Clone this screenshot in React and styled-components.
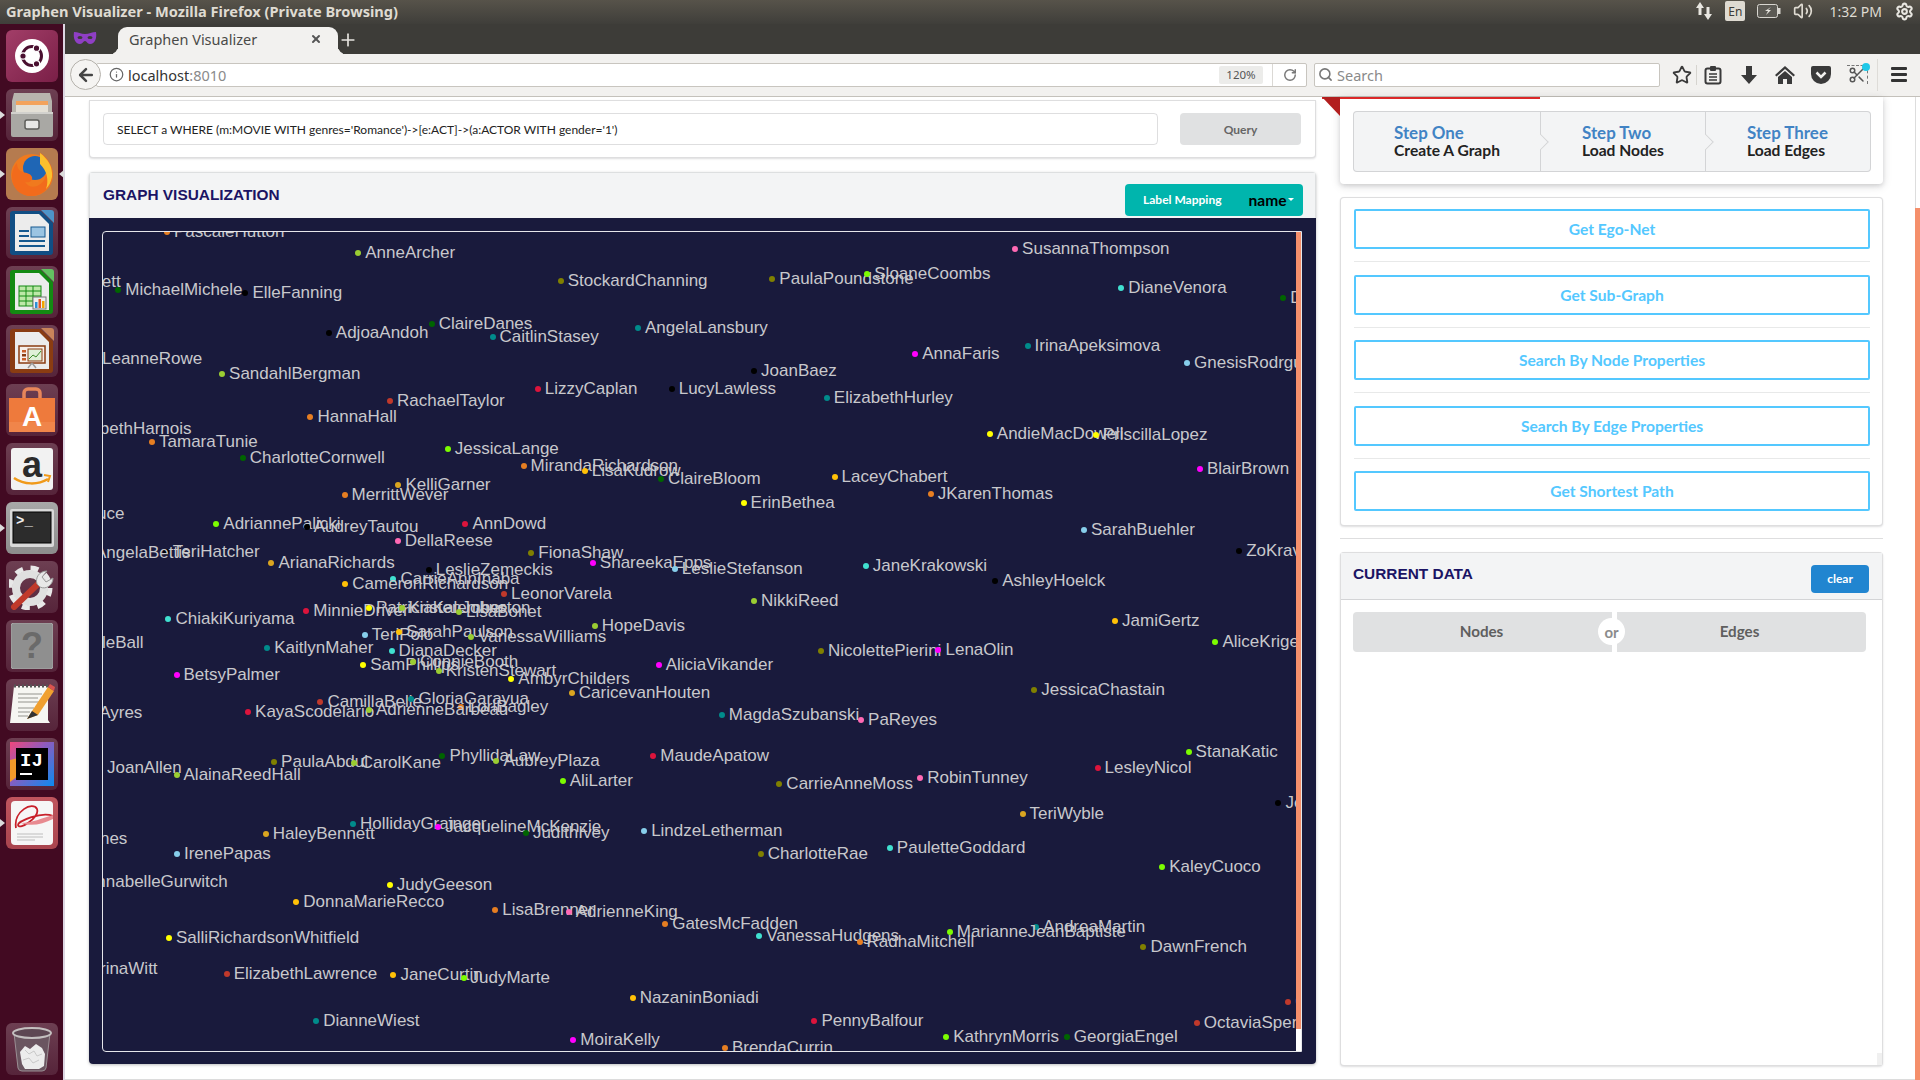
import React from "react";
import styled, { createGlobalStyle } from "styled-components";
import { Star, Plus, X, Search, RotateCw, Info, ArrowLeft, Settings, Volume2, Scissors } from "lucide-react";

const C = {
  or: "#e67e22",
  yg: "#9acd32",
  ol: "#808000",
  dg: "#006400",
  bk: "#000000",
  te: "#008b8b",
  cr: "#dc143c",
  br: "#c0392b",
  la: "#7cfc00",
  go: "#daa520",
  au: "#ffc107",
  ye: "#ffff00",
  pk: "#ff69b4",
  ma: "#ff00ff",
  tu: "#40e0d0",
  sk: "#87ceeb",
};

// node tables, one per area of the canvas: name, dot x, dot y, colour
const AREAS = [
  {
    ox: 100,
    oy: 225,
    kx: 600 / 1568,
    nodes: [
      ["PascaleHutton", 175, 22, "or"],
      ["AnneArcher", 675, 84, "yg"],
      ["MichaelMichele", 48, 195, "dg"],
      ["ElleFanning", 380, 203, "bk"],
      ["StockardChanning", 1204, 169, "ol"],
      ["AdjoaAndoh", 598, 323, "bk"],
      ["ClaireDanes", 867, 298, "dg"],
      ["CaitlinStasey", 1026, 335, "te"],
      ["AngelaLansbury", 1406, 310, "te"],
      ["SandahlBergman", 319, 448, "yg"],
      ["RachaelTaylor", 758, 527, "br"],
      ["HannaHall", 550, 575, "or"],
      ["LizzyCaplan", 1144, 491, "cr"],
      ["LucyLawless", 1494, 493, "bk"],
      ["TamaraTunie", 136, 650, "or"],
      ["CharlotteCornwell", 373, 700, "dg"],
      ["JessicaLange", 909, 673, "la"],
      ["MirandaRichardson", 1107, 723, "or"],
      ["LisaKudrow", 1267, 738, "au"],
      ["ClaireBloom", 1466, 763, "dg"],
      ["KelliGarner", 780, 781, "go"],
      ["MerrittWever", 639, 811, "or"],
      ["AdriannePalicki", 304, 897, "la"],
      ["AudreyTautou", 540, 905, "bk"],
      ["AnnDowd", 955, 897, "cr"],
      ["DellaReese", 778, 949, "pk"],
      ["FionaShaw", 1127, 983, "ol"],
      ["TeriHatcher", 172, 980, "bk"],
      ["ArianaRichards", 448, 1015, "go"],
      ["ShareekaEpps", 1288, 1015, "ma"],
      ["LeslieZemeckis", 859, 1034, "bk"],
      ["LeslieStefanson", 1502, 1032, "sk"],
      ["CarrieAnnInaba", 767, 1062, "tu"],
      ["CameronRichardson", 641, 1076, "au"],
      ["LeonorVarela", 1056, 1108, "br"],
      ["ChiakiKuriyama", 179, 1181, "tu"],
      ["MinnieDriver", 539, 1159, "cr"],
      ["PatriciaKalember", 703, 1150, "ye"],
      ["KristenJohnston", 788, 1148, "yg"],
      ["LisaBonet", 938, 1162, "yg"],
      ["HopeDavis", 1293, 1204, "yg"],
      ["TeriPolo", 692, 1229, "sk"],
      ["SarahPaulson", 782, 1222, "au"],
      ["VanessaWilliams", 970, 1237, "yg"],
    ],
  },
  {
    ox: 700,
    oy: 225,
    kx: 610 / 1568,
    nodes: [
      ["SusannaThompson", 810, 73, "pk"],
      ["PaulaPoundstone", 186, 161, "ol"],
      ["SloaneCoombs", 430, 148, "la"],
      ["DianeVenora", 1083, 188, "tu"],
      ["DeniseCrosby", 1499, 218, "dg"],
      ["AnnaFaris", 553, 387, "ma"],
      ["IrinaApeksimova", 842, 364, "te"],
      ["GnesisRodrguez", 1252, 414, "sk"],
      ["JoanBaez", 139, 437, "bk"],
      ["ElizabethHurley", 326, 520, "te"],
      ["AndieMacDowell", 745, 627, "ye"],
      ["PriscillaLopez", 1017, 630, "ye"],
      ["BlairBrown", 1285, 731, "ma"],
      ["LaceyChabert", 346, 755, "au"],
      ["JKarenThomas", 593, 807, "or"],
      ["ErinBethea", 112, 835, "ye"],
      ["SarahBuehler", 987, 916, "sk"],
      ["ZoKravitz", 1386, 979, "bk"],
      ["JaneKrakowski", 426, 1023, "tu"],
      ["AshleyHoelck", 759, 1069, "bk"],
      ["NikkiReed", 139, 1127, "yg"],
      ["JamiGertz", 1067, 1189, "au"],
      ["AliceKrige", 1325, 1250, "la"],
    ],
  },
  {
    ox: 100,
    oy: 640,
    kx: 600 / 1568,
    nodes: [
      ["KaitlynMaher", 437, 25, "te"],
      ["DianaDecker", 762, 32, "tu"],
      ["SamPhillips", 688, 75, "ye"],
      ["ConnieBooth", 818, 67, "yg"],
      ["KristenStewart", 885, 93, "yg"],
      ["AmbyrChilders", 1075, 116, "ye"],
      ["AliciaVikander", 1460, 75, "ma"],
      ["BetsyPalmer", 200, 105, "ma"],
      ["CaricevanHouten", 1233, 158, "go"],
      ["CamillaBelle", 576, 187, "br"],
      ["GloriaGarayua", 814, 176, "te"],
      ["LoriBagley", 943, 200, "or"],
      ["KayaScodelario", 387, 217, "cr"],
      ["AdrienneBarbeau", 703, 209, "yg"],
      ["PaulaAbdul", 455, 367, "ol"],
      ["CarolKane", 663, 368, "yg"],
      ["PhyllidaLaw", 895, 349, "dg"],
      ["AubreyPlaza", 1036, 362, "yg"],
      ["AliLarter", 1209, 424, "la"],
      ["MaudeApatow", 1446, 349, "cr"],
      ["AlainaReedHall", 200, 406, "yg"],
      ["HollidayGrainger", 661, 551, "te"],
      ["JacquelineMcKenzie", 884, 560, "ma"],
      ["JudithIvey", 1113, 580, "dg"],
      ["HaleyBennett", 433, 582, "go"],
      ["LindzeLetherman", 1422, 572, "sk"],
      ["IrenePapas", 201, 643, "sk"],
      ["JudyGeeson", 757, 734, "ye"],
      ["DonnaMarieRecco", 513, 787, "au"],
      ["LisaBrenner", 1033, 809, "or"],
      ["AdrienneKing", 1225, 815, "pk"],
      ["GatesMcFadden", 1477, 851, "or"],
      ["SalliRichardsonWhitfield", 180, 895, "ye"],
      ["ElizabethLawrence", 331, 1002, "br"],
      ["JaneCurtin", 767, 1004, "au"],
      ["JudyMarte", 950, 1015, "la"],
      ["NazaninBoniadi", 1392, 1075, "au"],
      ["DianneWiest", 565, 1143, "te"],
      ["MoiraKelly", 1237, 1200, "ma"],
    ],
  },
  {
    ox: 700,
    oy: 640,
    kx: 610 / 1568,
    nodes: [
      ["NicolettePierini", 311, 32, "ol"],
      ["LenaOlin", 613, 31, "ma"],
      ["JessicaChastain", 859, 150, "ol"],
      ["MagdaSzubanski", 56, 224, "te"],
      ["PaReyes", 414, 241, "pk"],
      ["StanaKatic", 1256, 335, "la"],
      ["LesleyNicol", 1022, 385, "cr"],
      ["RobinTunney", 566, 414, "pk"],
      ["CarrieAnneMoss", 204, 431, "ol"],
      ["TeriWyble", 829, 523, "go"],
      ["CharlotteRae", 156, 643, "ol"],
      ["PauletteGoddard", 488, 625, "tu"],
      ["KaleyCuoco", 1188, 682, "la"],
      ["AndreaMartin", 864, 862, "te"],
      ["MarianneJeanBaptiste", 642, 876, "la"],
      ["VanessaHudgens", 152, 887, "tu"],
      ["RadhaMitchell", 410, 905, "or"],
      ["DawnFrench", 1140, 921, "ol"],
      ["PennyBalfour", 294, 1142, "cr"],
      ["KathrynMorris", 633, 1190, "la"],
      ["GeorgiaEngel", 943, 1192, "dg"],
      ["OctaviaSpencer", 1277, 1150, "br"],
      ["OliviaHussey", 1512, 1085, "br"],
      ["JenniferLopez", 1487, 488, "bk"],
      ["BrendaCurrin", 64, 1223, "or"],
    ],
  },
  {
    // dots are outside the canvas on the left, only part of the label shows
    ox: 0,
    oy: 0,
    kx: 1,
    nodes: [
      ["AngelaBassett", 4, 282, "dg"],
      ["LeanneRowe", 95, 359, "bk"],
      ["ElizabethHarnois", 56, 429, "bk"],
      ["Bruce", 73, 514, "bk"],
      ["AngelaBettis", 88, 553, "bk"],
      ["LucilleBall", 60, 643, "bk"],
      ["AgnesAyres", 44, 713, "bk"],
      ["JoanAllen", 100, 768, "bk"],
      ["Jones", 75, 839, "bk"],
      ["AnnabelleGurwitch", 78, 882, "bk"],
      ["KatarinaWitt", 58, 969, "bk"],
    ],
  },
];

const CANVAS_X = 103;
const CANVAS_Y = 232;

const NODES = AREAS.flatMap((area) =>
  area.nodes.map(([name, x, y, color]) => ({
    name,
    color: C[color],
    left: area.ox + x * area.kx - CANVAS_X,
    top: area.oy + (area.kx === 1 ? y : y / 3) - CANVAS_Y,
  }))
);

const ACTIONS = [
  "Get Ego-Net",
  "Get Sub-Graph",
  "Search By Node Properties",
  "Search By Edge Properties",
  "Get Shortest Path",
];

const STEPS = [
  ["Step One", "Create A Graph", 187],
  ["Step Two", "Load Nodes", 165],
  ["Step Three", "Load Edges", 166],
];

const DocIcon = ({ edge, fold, children }) => (
  <svg width="44" height="46" viewBox="0 0 44 46">
    <path d="M3 1h28l12 12v29a3 3 0 0 1-3 3H3a3 3 0 0 1-3-3V4a3 3 0 0 1 3-3z" fill={edge} />
    <path d="M5 4h24l10 10v27H5z" fill="#ececec" />
    <path d="M31 0h10a3 3 0 0 1 3 3v10z" fill={fold} />
    {children}
  </svg>
);

const launcherItems = [
  {
    key: "ubuntu",
    tint: "linear-gradient(135deg,#a23e68,#7a1f47)",
    icon: (
      <svg width="40" height="40" viewBox="0 0 40 40">
        <circle cx="20" cy="20" r="17" fill="#fff" />
        <circle cx="20" cy="20" r="9.5" fill="none" stroke="#4a1030" strokeWidth="3" />
        <circle cx="11" cy="20" r="3.2" fill="#4a1030" stroke="#fff" strokeWidth="1.2" />
        <circle cx="24.5" cy="12.2" r="3.2" fill="#4a1030" stroke="#fff" strokeWidth="1.2" />
        <circle cx="24.5" cy="27.8" r="3.2" fill="#4a1030" stroke="#fff" strokeWidth="1.2" />
      </svg>
    ),
  },
  {
    key: "files",
    running: true,
    icon: (
      <svg width="44" height="46" viewBox="0 0 44 46">
        <path d="M4 1h36l2 8v12H2V9z" fill="#b7b4ad" />
        <rect x="6" y="9" width="32" height="4" fill="#f3a35c" />
        <rect x="6" y="13" width="32" height="8" fill="#e4e0d6" />
        <rect x="1" y="20" width="42" height="25" rx="2" fill="#a9a8a4" />
        <rect x="1" y="20" width="42" height="2" fill="#d2d1cd" />
        <rect x="15" y="28" width="14" height="9" rx="2" fill="#e8e8e6" stroke="#5d5d5a" strokeWidth="1.5" />
      </svg>
    ),
  },
  {
    key: "firefox",
    running: true,
    active: true,
    tint: "#b57b4f",
    icon: (
      <svg width="46" height="48" viewBox="0 0 46 48">
        <circle cx="23" cy="25" r="21" fill="#f07a1e" />
        <circle cx="26" cy="18" r="12" fill="#1f66b5" />
        <path d="M30 2c10 6 15 16 13 27-2 10-11 17-21 17C11 46 3 38 3 27c0-6 2-11 5-14 0 5 2 8 6 9 4 1 8 2 9 5 1 4-3 6-7 5 3 5 9 6 14 3 7-4 9-13 6-20-2-5-5-9-6-13z" fill="#f26b1c" />
        <path d="M31 3c8 6 13 14 12 24-1 5-3 9-6 12 3-9 1-18-6-25z" fill="#fbc02d" />
      </svg>
    ),
  },
  {
    key: "writer",
    icon: (
      <DocIcon edge="#114e84" fold="#4d94c9">
        <rect x="9" y="20" width="10" height="2" fill="#16598f" />
        <rect x="9" y="25" width="10" height="2" fill="#16598f" />
        <rect x="9" y="30" width="26" height="2" fill="#16598f" />
        <rect x="9" y="35" width="26" height="2" fill="#16598f" />
        <rect x="21" y="17" width="14" height="10" fill="#9bc4e2" stroke="#16598f" />
      </DocIcon>
    ),
  },
  {
    key: "calc",
    icon: (
      <DocIcon edge="#138a12" fold="#63c261">
        <rect x="9" y="17" width="22" height="20" fill="#bde8a8" stroke="#138a12" />
        <path d="M9 22h22M9 27h22M9 32h22M16 17v20M23 17v20" stroke="#138a12" />
        <rect x="23" y="28" width="13" height="12" fill="#eee" stroke="#777" />
        <rect x="25" y="33" width="2.5" height="6" fill="#2d8fd6" />
        <rect x="28.5" y="30" width="2.5" height="9" fill="#e2562a" />
        <rect x="32" y="32" width="2.5" height="7" fill="#f0a500" />
      </DocIcon>
    ),
  },
  {
    key: "impress",
    icon: (
      <DocIcon edge="#8a3c12" fold="#c9835a">
        <rect x="9" y="18" width="26" height="17" fill="#f7f0ea" stroke="#8a3c12" strokeWidth="1.5" />
        <rect x="12" y="22" width="4" height="2.5" fill="#c9602a" />
        <rect x="12" y="26" width="4" height="2.5" fill="#8a3c12" />
        <rect x="12" y="30" width="4" height="2.5" fill="#c9602a" />
        <rect x="18" y="21" width="14" height="12" fill="#dff0d8" stroke="#8a3c12" />
        <path d="M19 31l4-4 3 2 5-6" stroke="#3c8c2a" fill="none" />
        <path d="M22 35l-4 5M22 35l4 5" stroke="#999" strokeWidth="1.5" />
      </DocIcon>
    ),
  },
  {
    key: "software",
    icon: (
      <svg width="46" height="46" viewBox="0 0 46 46">
        <path d="M15 12V6a4 4 0 0 1 4-4h8a4 4 0 0 1 4 4v6" fill="none" stroke="#e8865a" strokeWidth="3.5" />
        <rect x="0" y="11" width="46" height="34" fill="#ee7a3c" />
        <rect x="0" y="35" width="46" height="10" fill="#f0854a" />
        <text x="23" y="39" textAnchor="middle" fontFamily="Liberation Sans, sans-serif" fontWeight="700" fontSize="28" fill="#fff">A</text>
      </svg>
    ),
  },
  {
    key: "amazon",
    icon: (
      <svg width="42" height="42" viewBox="0 0 42 42">
        <rect width="42" height="42" rx="3" fill="#f2f2f2" />
        <text x="21" y="29" textAnchor="middle" fontFamily="Liberation Sans, sans-serif" fontWeight="700" fontSize="36" fill="#2b2b2b">a</text>
        <path d="M3 30c10 7 24 7 34 1" fill="none" stroke="#f09a1a" strokeWidth="2.5" />
        <path d="M33 27l6 1-2 6" fill="none" stroke="#f09a1a" strokeWidth="2" />
      </svg>
    ),
  },
  {
    key: "terminal",
    running: true,
    tint: "linear-gradient(#a8a8a8,#8c8c8c)",
    icon: (
      <svg width="44" height="38" viewBox="0 0 44 38">
        <rect width="44" height="38" rx="2" fill="#d9d9d9" />
        <rect x="3" y="3" width="38" height="31" fill="#2c2c2c" stroke="#000" />
        <text x="6" y="16" fontFamily="Liberation Mono, monospace" fontWeight="700" fontSize="14" fill="#eee">&gt;_</text>
      </svg>
    ),
  },
  {
    key: "settings",
    icon: (
      <svg width="46" height="46" viewBox="0 0 46 46">
        <circle cx="21" cy="24" r="14" fill="none" stroke="#e0e0e0" strokeWidth="8" />
        <circle cx="21" cy="24" r="20" fill="none" stroke="#e8e8e8" strokeWidth="5" strokeDasharray="8 7.7" />
        <path d="M5 43L30 19" stroke="#c0392b" strokeWidth="6" strokeLinecap="round" />
        <path d="M28 20c-2-6 2-13 10-13l-5 6 4 5 7-4c0 7-7 12-13 9z" fill="#e8e8e8" stroke="#999" />
      </svg>
    ),
  },
  {
    key: "help",
    icon: (
      <svg width="42" height="46" viewBox="0 0 42 46">
        <rect width="42" height="46" rx="3" fill="#8f8f8f" stroke="#a8a8a8" />
        <text x="21" y="35" textAnchor="middle" fontFamily="Liberation Sans, sans-serif" fontWeight="700" fontSize="36" fill="#6a6a6a">?</text>
      </svg>
    ),
  },
  {
    key: "editor",
    icon: (
      <svg width="46" height="46" viewBox="0 0 46 46">
        <path d="M5 4h34v34l2 3H1z" fill="#f6f6f2" />
        <path d="M5 4h34" stroke="#555" strokeWidth="3" strokeDasharray="2 2" />
        <path d="M9 12h24M9 16h20M9 20h22M9 26h16M9 30h12M9 34h10" stroke="#b5b5b0" strokeWidth="1.5" />
        <path d="M18 37l5-8L39 5l6 4-16 24z" fill="#f0a030" />
        <path d="M39 5l2-3 5 3-1 4z" fill="#d9534f" />
        <path d="M18 37l5-8 6 4z" fill="#333" />
      </svg>
    ),
  },
  {
    key: "intellij",
    icon: (
      <svg width="44" height="44" viewBox="0 0 44 44">
        <defs>
          <linearGradient id="ij" x1="0" y1="0" x2="1" y2="1">
            <stop offset="0" stopColor="#f0477c" />
            <stop offset="0.45" stopColor="#8a5cc0" />
            <stop offset="1" stopColor="#0a8bf0" />
          </linearGradient>
        </defs>
        <rect width="44" height="44" fill="url(#ij)" />
        <path d="M0 18l8-2v18l-8 6z" fill="#f09a2a" />
        <rect x="6" y="6" width="32" height="32" fill="#000" />
        <text x="10" y="24" fontFamily="Liberation Mono, monospace" fontWeight="700" fontSize="19" fill="#fff">IJ</text>
        <rect x="10" y="31" width="12" height="2" fill="#fff" />
      </svg>
    ),
  },
  {
    key: "evince",
    running: true,
    tint: "linear-gradient(#c0555e,#a8444e)",
    icon: (
      <svg width="42" height="44" viewBox="0 0 42 44">
        <rect width="42" height="44" rx="4" fill="#f6f6f6" />
        <path d="M5 27C2 10 22 0 26 8c3 8-18 22-19 16 0-4 24-14 35-9" fill="none" stroke="#c8202a" strokeWidth="1.8" />
        <path d="M10 22c10 0 22-5 32-8v4c-10 5-22 8-32 4z" fill="#e88a90" />
        <path d="M6 33h26M6 36h26M6 39h18" stroke="#bdbdbd" strokeWidth="1.2" />
      </svg>
    ),
  },
];

const TrashIcon = () => (
  <svg width="40" height="46" viewBox="0 0 40 46">
    <path d="M2 7l4 35a4 4 0 0 0 4 3h20a4 4 0 0 0 4-3l4-35z" fill="#6a5560" stroke="#9a8f94" />
    <ellipse cx="20" cy="7" rx="19" ry="5" fill="#5d4753" stroke="#c4c0c0" strokeWidth="2" />
    <path d="M8 26l5-6 5 3 6-5 6 4 3 6-1 12-5 3H13l-3-5z" fill="#ececec" />
    <path d="M13 24l4 4 5-3 3 5 5-2M11 34l6-2 4 5 6-3" fill="none" stroke="#c9c9c9" />
  </svg>
);

const LauncherDock = () => (
  <Dock>
    {launcherItems.map((item) => (
      <Tile key={item.key} $tint={item.tint}>
        {item.running && <RunPip />}
        {item.active && <ActivePip />}
        {item.icon}
      </Tile>
    ))}
    <TrashTile>
      <TrashIcon />
    </TrashTile>
  </Dock>
);

const TopBar = () => (
  <TitleBar>
    <WindowTitle>Graphen Visualizer - Mozilla Firefox (Private Browsing)</WindowTitle>
    <Tray>
      <svg width="18" height="20" viewBox="0 0 18 20" fill="#e8e6e0">
        <path d="M5 1l4 6H6.500v7h-3V7H1z" />
        <path d="M13 19l-4-6h2.500V6h3v7H17z" />
      </svg>
      <LangBox>En</LangBox>
      <svg width="24" height="14" viewBox="0 0 24 14">
        <rect x="0.500" y="0.500" width="20" height="13" rx="2" fill="#5c5a54" stroke="#d8d6d0" />
        <rect x="21" y="4" width="2.500" height="6" fill="#d8d6d0" />
        <path d="M14 3l-3 3h3l-5 5 2-4H8z" fill="#e8e6e0" />
      </svg>
      <Volume2 size={20} color="#dfdbd2" />
      <Clock>1:32 PM</Clock>
      <Settings size={19} color="#e8e6e0" strokeWidth={2.6} />
    </Tray>
  </TitleBar>
);

const TabRow = () => (
  <TabStrip>
    <svg width="24" height="14" viewBox="0 0 24 14">
      <path d="M1 1c4 0 7 2 11 2s7-2 11-2c1 6-1 12-6 12-3 0-3-3-5-3s-2 3-5 3C2 13 0 7 1 1z" fill="#8f3fc4" />
      <ellipse cx="7" cy="6.500" rx="2.500" ry="1.500" fill="#3d3c38" />
      <ellipse cx="17" cy="6.500" rx="2.500" ry="1.500" fill="#3d3c38" />
    </svg>
    <Tab>
      <TabTitle>Graphen Visualizer</TabTitle>
      <X size={12} color="#555" strokeWidth={4} />
    </Tab>
    <NewTab>
      <Plus size={20} color="#e6e4df" />
    </NewTab>
  </TabStrip>
);

const NavBar = () => (
  <Toolbar>
    <BackButton>
      <ArrowLeft size={20} color="#444" strokeWidth={3} />
    </BackButton>
    <UrlBar>
      <Info size={15} color="#666" />
      <UrlText>
        localhost<span>:8010</span>
      </UrlText>
      <ZoomLevel>120%</ZoomLevel>
      <Reload>
        <RotateCw size={14} color="#777" strokeWidth={2.5} />
      </Reload>
    </UrlBar>
    <SearchBar>
      <Search size={15} color="#777" strokeWidth={2.5} />
      <span>Search</span>
    </SearchBar>
    <StarButton>
      <Star size={20} color="#3a3a3a" strokeWidth={2.2} />
    </StarButton>
    <ToolIcon>
      <svg width="18" height="20" viewBox="0 0 18 20">
        <rect x="1.500" y="3.500" width="15" height="15" rx="2" fill="none" stroke="#3a3a3a" strokeWidth="2" />
        <rect x="6" y="1" width="6" height="5" rx="1" fill="#3a3a3a" />
        <path d="M5 9h8M5 12h8M5 15h8" stroke="#3a3a3a" strokeWidth="1.500" />
      </svg>
    </ToolIcon>
    <ToolIcon>
      <svg width="18" height="20" viewBox="0 0 18 20">
        <path d="M6 1h6v9h5l-8 9-8-9h5z" fill="#3a3a3a" />
      </svg>
    </ToolIcon>
    <ToolIcon>
      <svg width="20" height="20" viewBox="0 0 20 20">
        <path d="M10 1L0 10l1.500 1.500L10 4l8.500 7.500L20 10z" fill="#3a3a3a" />
        <path d="M3 12l7-6 7 6v7h-5v-5H8v5H3z" fill="#3a3a3a" />
      </svg>
    </ToolIcon>
    <ToolIcon>
      <svg width="20" height="18" viewBox="0 0 20 18">
        <path d="M2 0h16a2 2 0 0 1 2 2v6a10 10 0 0 1-20 0V2a2 2 0 0 1 2-2z" fill="#3a3a3a" />
        <path d="M5.500 6.500L10 11l4.500-4.500" fill="none" stroke="#f2f1ef" strokeWidth="2.500" />
      </svg>
    </ToolIcon>
    <ToolIcon>
      <ScissorsBox>
        <Scissors size={18} color="#555" strokeWidth={2} />
        <ScissorsDot />
      </ScissorsBox>
    </ToolIcon>
    <MenuButton>
      <MenuBars>
        <i />
        <i />
        <i />
      </MenuBars>
    </MenuButton>
  </Toolbar>
);

const QuerySection = () => (
  <QueryCard>
    <QueryInput>SELECT a WHERE (m:MOVIE WITH genres='Romance')-&gt;[e:ACT]-&gt;(a:ACTOR WITH gender='1')</QueryInput>
    <QueryButton>Query</QueryButton>
  </QueryCard>
);

const GraphSection = () => (
  <GraphPanel>
    <PanelHeader>
      <Heading>GRAPH VISUALIZATION</Heading>
      <MappingButton>
        <MappingLabel>Label Mapping</MappingLabel>
        <MappingValue>name</MappingValue>
        <Caret />
      </MappingButton>
    </PanelHeader>
    <GraphBody>
      <Canvas>
        {NODES.map((node) => (
          <GraphNode key={node.name} style={{ left: node.left - 3, top: node.top }}>
            <Dot style={{ background: node.color }} />
            <NodeLabel>{node.name}</NodeLabel>
          </GraphNode>
        ))}
        <CanvasTrack>
          <CanvasThumb />
        </CanvasTrack>
      </Canvas>
    </GraphBody>
  </GraphPanel>
);

const StepsSection = () => (
  <StepsCard>
    <Ribbon />
    <RibbonFold />
    <StepGroup>
      {STEPS.map(([title, text, width], i) => (
        <Step key={title} $width={width} $inset={i === 0 ? 40 : 41}>
          <StepTitle>{title}</StepTitle>
          <StepText>{text}</StepText>
          {i < 2 && <StepArrow />}
        </Step>
      ))}
    </StepGroup>
  </StepsCard>
);

const ActionsSection = () => (
  <ActionsCard>
    {ACTIONS.map((label, i) => (
      <React.Fragment key={label}>
        {i > 0 && <Rule />}
        <ActionButton>{label}</ActionButton>
      </React.Fragment>
    ))}
  </ActionsCard>
);

const CurrentDataSection = () => (
  <DataCard>
    <DataHeader>
      <Heading>CURRENT DATA</Heading>
      <ClearButton>clear</ClearButton>
    </DataHeader>
    <DataBody>
      <Segments>
        <Segment $width={259} $trim={2}>Nodes</Segment>
        <Or>or</Or>
        <Segment $width={249} $trim={4}>Edges</Segment>
      </Segments>
    </DataBody>
    <Corner />
  </DataCard>
);

export default function App() {
  return (
    <Screen>
      <GlobalStyle />
      <TopBar />
      <Body>
        <LauncherDock />
        <Browser>
          <TabRow />
          <NavBar />
          <Page>
            <Content>
              <LeftColumn>
                <QuerySection />
                <GraphSection />
              </LeftColumn>
              <RightColumn>
                <StepsSection />
                <ActionsSection />
                <PageRule />
                <CurrentDataSection />
              </RightColumn>
            </Content>
            <PageTrack>
              <PageThumb />
            </PageTrack>
          </Page>
        </Browser>
      </Body>
    </Screen>
  );
}

const GlobalStyle = createGlobalStyle`
  html, body {
    margin: 0;
    padding: 0;
    background: #fff;
  }
  * {
    box-sizing: border-box;
  }
`;

const Screen = styled.div`
  width: 1920px;
  height: 1080px;
  overflow: hidden;
  display: flex;
  flex-direction: column;
  font-family: "Lato", "Liberation Sans", sans-serif;
`;

const TitleBar = styled.div`
  height: 24px;
  flex: none;
  display: flex;
  align-items: center;
  justify-content: space-between;
  padding: 0 6px 2px 6px;
  background: linear-gradient(#57534a, #3f3e3a);
`;

const WindowTitle = styled.div`
  font-family: "Noto Sans", sans-serif;
  font-size: 14.6px;
  font-weight: 700;
  color: #dfdbd2;
`;

const Tray = styled.div`
  display: flex;
  align-items: center;
  gap: 12px;
`;

const LangBox = styled.div`
  width: 20px;
  height: 20px;
  display: flex;
  align-items: center;
  justify-content: center;
  background: #dfdbd2;
  border-radius: 2px;
  font-family: "Noto Sans", sans-serif;
  font-size: 12px;
  color: #3c3b37;
`;

const Clock = styled.div`
  font-family: "Noto Sans", sans-serif;
  font-size: 14px;
  color: #dfdbd2;
  margin: 0 1px 0 4px;
`;

const Body = styled.div`
  flex: 1;
  display: flex;
  min-height: 0;
`;

const Dock = styled.div`
  width: 65px;
  flex: none;
  display: flex;
  flex-direction: column;
  align-items: flex-start;
  gap: 7px;
  padding: 6px 0 5px 6px;
  background: #420a22;
  border-right: 2px solid #dcd6e2;
`;

const Tile = styled.div`
  position: relative;
  width: 52px;
  height: 52px;
  flex: none;
  display: flex;
  align-items: center;
  justify-content: center;
  border-radius: 6px;
  background: ${(p) => p.$tint || "linear-gradient(#6d3f52, #56243a)"};
`;

const TrashTile = styled(Tile)`
  margin-top: auto;
`;

const RunPip = styled.div`
  position: absolute;
  left: -6px;
  top: 22px;
  border-left: 5px solid #dcdcdc;
  border-top: 4px solid transparent;
  border-bottom: 4px solid transparent;
`;

const ActivePip = styled.div`
  position: absolute;
  right: -6px;
  top: 22px;
  border-right: 5px solid #dcdcdc;
  border-top: 4px solid transparent;
  border-bottom: 4px solid transparent;
`;

const Browser = styled.div`
  flex: 1;
  min-width: 0;
  display: flex;
  flex-direction: column;
`;

const TabStrip = styled.div`
  height: 30px;
  flex: none;
  display: flex;
  align-items: flex-end;
  padding-left: 8px;
  background: #3d3c38;

  > svg {
    align-self: center;
    margin-right: 21px;
    margin-bottom: 3px;
  }
`;

const Tab = styled.div`
  position: relative;
  width: 220px;
  height: 27px;
  display: flex;
  align-items: center;
  justify-content: space-between;
  padding: 0 16px 3px 11px;
  background: #f2f1ef;
  border-radius: 9px 9px 0 0;

  &::before,
  &::after {
    content: "";
    position: absolute;
    bottom: 0;
    width: 8px;
    height: 8px;
    background: transparent;
  }
  &::before {
    left: -8px;
    border-bottom-right-radius: 8px;
    box-shadow: 3px 3px 0 #f2f1ef;
  }
  &::after {
    right: -8px;
    border-bottom-left-radius: 8px;
    box-shadow: -3px 3px 0 #f2f1ef;
  }
`;

const TabTitle = styled.div`
  font-family: "Noto Sans", sans-serif;
  font-size: 14.5px;
  color: #4a4a48;
`;

const NewTab = styled.div`
  align-self: center;
  margin-top: 1px;
  display: flex;
`;

const Toolbar = styled.div`
  height: 43px;
  flex: none;
  display: flex;
  align-items: center;
  padding: 0 0 1px 5px;
  background: #f2f1ef;
  border-bottom: 1px solid #c4c1bb;
`;

const BackButton = styled.div`
  position: relative;
  z-index: 1;
  width: 31px;
  height: 31px;
  flex: none;
  display: flex;
  align-items: center;
  justify-content: center;
  border-radius: 50%;
  background: #f5f4f2;
  border: 1px solid #b5b2ac;
  margin-right: -5px;
`;

const UrlBar = styled.div`
  width: 1211px;
  height: 24px;
  flex: none;
  display: flex;
  align-items: center;
  padding-left: 12px;
  background: #fff;
  border: 1px solid #c8c5bf;
  border-radius: 2px;
`;

const UrlText = styled.div`
  margin-left: 4px;
  font-family: "Noto Sans", sans-serif;
  font-size: 14.5px;
  color: #333;

  span {
    color: #8a8a8a;
  }
`;

const ZoomLevel = styled.div`
  margin-left: auto;
  width: 44px;
  height: 18px;
  display: flex;
  align-items: center;
  justify-content: center;
  background: #ececea;
  border-radius: 2px;
  font-family: "Noto Sans", sans-serif;
  font-size: 11.5px;
  color: #555;
`;

const Reload = styled.div`
  margin-left: 9px;
  width: 34px;
  height: 100%;
  display: flex;
  align-items: center;
  justify-content: center;
  border-left: 1px solid #dbd9d5;
`;

const SearchBar = styled.div`
  width: 346px;
  height: 24px;
  flex: none;
  margin-left: 7px;
  display: flex;
  align-items: center;
  gap: 4px;
  padding-left: 3px;
  background: #fff;
  border: 1px solid #c8c5bf;
  border-radius: 2px;
  font-family: "Noto Sans", sans-serif;
  font-size: 14.5px;
  color: #8a8a8a;
`;

const StarButton = styled.div`
  width: 30px;
  margin-left: 7px;
  display: flex;
  justify-content: center;
  border-right: 1px solid #d6d4cf;
  margin-right: -2px;
`;

const ToolIcon = styled.div`
  width: 36px;
  display: flex;
  justify-content: center;
`;

const ScissorsBox = styled.div`
  position: relative;
  display: flex;
  border-top: 1px dashed #777;
  border-right: 1px dashed #777;
  padding: 0 1px;
`;

const ScissorsDot = styled.div`
  position: absolute;
  top: -3px;
  right: -3px;
  width: 8px;
  height: 8px;
  border-radius: 50%;
  background: #1fc8e8;
`;

const MenuButton = styled.div`
  margin-left: 2px;
  flex: 1;
  height: 32px;
  display: flex;
  align-items: center;
  justify-content: center;
  border-left: 1px solid #dedcd8;
`;

const MenuBars = styled.div`
  display: flex;
  flex-direction: column;
  gap: 3px;

  i {
    display: block;
    width: 16px;
    height: 3px;
    border-radius: 1px;
    background: #333;
  }
`;

const Page = styled.div`
  flex: 1;
  min-height: 0;
  display: flex;
  background: #fff;
`;

const Content = styled.div`
  flex: 1;
  display: flex;
  gap: 24px;
  padding-left: 24px;
  border-bottom: 1px solid #dcdcdc;
`;

const PageTrack = styled.div`
  width: 5px;
  flex: none;
  border-left: 1px solid #ddd;
  padding-top: 111px;
  background: #fff;
`;

const PageThumb = styled.div`
  height: 100%;
  margin-left: -1px;
  background: #f58f6b;
`;

const LeftColumn = styled.div`
  width: 1227px;
  flex: none;
  padding-top: 3px;
  display: flex;
  flex-direction: column;
  gap: 14px;
`;

const RightColumn = styled.div`
  width: 543px;
  flex: none;
  display: flex;
  flex-direction: column;
`;

const QueryCard = styled.div`
  height: 58px;
  flex: none;
  display: flex;
  align-items: center;
  gap: 22px;
  padding: 0 14px 0 13px;
  background: #fff;
  border: 1px solid rgba(34, 36, 38, 0.15);
  border-radius: 0 0 4px 4px;
  box-shadow: 0 1px 2px rgba(34, 36, 38, 0.15);
`;

const QueryInput = styled.div`
  flex: 1;
  height: 32px;
  display: flex;
  align-items: center;
  padding-left: 13px;
  border: 1px solid rgba(34, 36, 38, 0.15);
  border-radius: 4px;
  font-size: 12px;
  color: #222;
`;

const QueryButton = styled.div`
  width: 121px;
  height: 32px;
  display: flex;
  align-items: center;
  justify-content: center;
  background: #e0e1e2;
  border-radius: 4px;
  font-size: 12px;
  font-weight: 700;
  color: #666;
`;

const GraphPanel = styled.div`
  height: 892px;
  flex: none;
  display: flex;
  flex-direction: column;
  border-radius: 4px;
  overflow: hidden;
  box-shadow: 0 1px 3px rgba(34, 36, 38, 0.3);
`;

const PanelHeader = styled.div`
  height: 46px;
  flex: none;
  display: flex;
  align-items: center;
  justify-content: space-between;
  padding: 0 12px 2px 13px;
  background: #f3f4f5;
  border: 1px solid rgba(34, 36, 38, 0.1);
  border-bottom: 0;
`;

const Heading = styled.div`
  font-family: "Liberation Sans", sans-serif;
  font-size: 15.4px;
  font-weight: 700;
  color: #1b1464;
`;

const MappingButton = styled.div`
  width: 178px;
  height: 32px;
  margin-top: 10px;
  display: flex;
  align-items: center;
  padding-left: 18px;
  background: #00b5ad;
  border-radius: 4px;
`;

const MappingLabel = styled.div`
  font-size: 12px;
  font-weight: 700;
  color: #fff;
`;

const MappingValue = styled.div`
  margin-left: 27px;
  font-size: 15.6px;
  font-weight: 700;
  color: #000;
`;

const Caret = styled.div`
  margin-left: 1px;
  border-top: 3px solid #fff;
  border-left: 3px solid transparent;
  border-right: 3px solid transparent;
`;

const GraphBody = styled.div`
  flex: 1;
  display: flex;
  padding: 13px 14px 12px 13px;
  background: #191a3c;
`;

const Canvas = styled.div`
  position: relative;
  flex: 1;
  overflow: hidden;
  border: 1px solid #e6e6ea;
  border-radius: 4px 0 0 4px;
`;

const GraphNode = styled.div`
  position: absolute;
  display: flex;
  align-items: center;
  gap: 4px;
  white-space: nowrap;
  transform: translateY(-50%);
`;

const Dot = styled.div`
  width: 6px;
  height: 6px;
  flex: none;
  border-radius: 50%;
`;

const NodeLabel = styled.div`
  font-family: "Liberation Sans", sans-serif;
  font-size: 17px;
  line-height: 20px;
  color: #c8c8cc;
`;

const CanvasTrack = styled.div`
  position: absolute;
  top: 0;
  right: 0;
  bottom: 0;
  width: 5px;
  background: #fff;
`;

const CanvasThumb = styled.div`
  height: 797px;
  background: #f58f6b;
`;

const StepsCard = styled.div`
  position: relative;
  height: 87px;
  flex: none;
  padding: 14px 12px 0 13px;
  background: #fff;
  border-radius: 0 0 4px 4px;
  box-shadow: 0 2px 4px rgba(34, 36, 38, 0.12), 0 2px 10px rgba(34, 36, 38, 0.15);
`;

const Ribbon = styled.div`
  position: absolute;
  top: 0;
  left: -18px;
  width: 218px;
  height: 2px;
  background: #db2828;
`;

const RibbonFold = styled.div`
  position: absolute;
  top: 0;
  left: -18px;
  border-top: 19px solid #b21e1e;
  border-left: 18px solid transparent;
`;

const StepGroup = styled.div`
  height: 61px;
  display: flex;
  background: #f3f4f5;
  border: 1px solid rgba(34, 36, 38, 0.15);
  border-radius: 4px;
`;

const Step = styled.div`
  position: relative;
  width: ${(p) => p.$width}px;
  flex: none;
  display: flex;
  flex-direction: column;
  justify-content: center;
  padding: 0 0 2px ${(p) => p.$inset}px;
  border-right: 1px solid rgba(34, 36, 38, 0.15);

  &:last-child {
    border-right: 0;
    flex: 1;
  }
`;

const StepTitle = styled.div`
  font-size: 16.9px;
  line-height: 18px;
  font-weight: 700;
  color: #4183c4;
`;

const StepText = styled.div`
  font-size: 15.6px;
  line-height: 16px;
  font-weight: 700;
  color: #222;
`;

const StepArrow = styled.div`
  position: absolute;
  top: 50%;
  right: -7px;
  width: 13px;
  height: 13px;
  background: #f3f4f5;
  border-top: 1px solid rgba(34, 36, 38, 0.15);
  border-right: 1px solid rgba(34, 36, 38, 0.15);
  transform: translateY(-50%) rotate(45deg) scale(0.9, 0.9);
  z-index: 1;
`;

const ActionsCard = styled.div`
  height: 329px;
  flex: none;
  margin-top: 13px;
  padding: 11px 12px 0 13px;
  background: #fff;
  border: 1px solid rgba(34, 36, 38, 0.15);
  border-radius: 4px;
  box-shadow: 0 1px 2px rgba(34, 36, 38, 0.15);
`;

const ActionButton = styled.div`
  height: 40px;
  display: flex;
  align-items: center;
  justify-content: center;
  border: 2px solid #54c8ff;
  border-radius: 2px;
  font-size: 15.6px;
  font-weight: 700;
  color: #54c8ff;
`;

const Rule = styled.div`
  height: 1px;
  margin: 12.3px 0;
  background: rgba(34, 36, 38, 0.1);
`;

const PageRule = styled.div`
  height: 1px;
  flex: none;
  margin: 12px 0 13px;
  background: rgba(34, 36, 38, 0.15);
`;

const DataCard = styled.div`
  position: relative;
  height: 514px;
  flex: none;
  background: #fff;
  border: 1px solid rgba(34, 36, 38, 0.15);
  border-radius: 4px;
  box-shadow: 0 1px 2px rgba(34, 36, 38, 0.15);
`;

const DataHeader = styled.div`
  height: 47px;
  display: flex;
  align-items: center;
  justify-content: space-between;
  padding: 0 13px 4px 12px;
  background: #f3f4f5;
  border-bottom: 1px solid rgba(34, 36, 38, 0.15);
`;

const ClearButton = styled.div`
  width: 58px;
  height: 28px;
  margin-top: 9px;
  display: flex;
  align-items: center;
  justify-content: center;
  background: #2185d0;
  border-radius: 4px;
  font-size: 12px;
  font-weight: 700;
  color: #fff;
`;

const DataBody = styled.div`
  padding: 12px 12px;
`;

const Segments = styled.div`
  position: relative;
  display: flex;
  gap: 5px;
`;

const Segment = styled.div`
  width: ${(p) => p.$width}px;
  height: 40px;
  display: flex;
  align-items: center;
  justify-content: center;
  padding: 0 ${(p) => p.$trim}px 2px 0;
  background: #e0e1e2;
  font-size: 15.2px;
  font-weight: 700;
  color: #5f5f5f;

  &:first-child {
    border-radius: 4px 0 0 4px;
  }
  &:last-child {
    border-radius: 0 4px 4px 0;
  }
`;

const Or = styled.div`
  position: absolute;
  top: 6px;
  left: 245px;
  width: 27px;
  height: 27px;
  display: flex;
  align-items: center;
  justify-content: center;
  background: #fff;
  border-radius: 50%;
  font-size: 15px;
  font-weight: 700;
  color: #8c8c8c;
`;

const Corner = styled.div`
  position: absolute;
  right: 0;
  bottom: 0;
  width: 5px;
  height: 12px;
  background: #f0f0f0;
`;
